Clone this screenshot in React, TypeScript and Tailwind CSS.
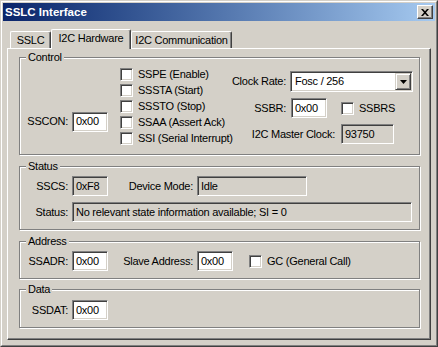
const sunken =
  "border border-t-[#808080] border-l-[#808080] border-b-white border-r-white shadow-[inset_1px_1px_0_#404040,inset_-1px_-1px_0_#d4d0c8]";

function Edit({ value, className = "", readOnly = false }: { value: string; className?: string; readOnly?: boolean }) {
  return (
    <div
      className={`${sunken} ${readOnly ? "bg-[#d4d0c8]" : "bg-white"} h-[20px] flex items-center pl-[3px] whitespace-nowrap overflow-hidden ${className}`}
    >
      {value}
    </div>
  );
}

function Label({ text, className = "" }: { text: string; className?: string }) {
  return <div className={`text-right whitespace-nowrap ${className}`}>{text}</div>;
}

function Check({ label, className = "" }: { label: string; className?: string }) {
  return (
    <div className={`flex items-center ${className}`}>
      <div className={`${sunken} bg-white w-[13px] h-[13px] shrink-0`} />
      <span className="ml-[5px] whitespace-nowrap">{label}</span>
    </div>
  );
}

function Group({ title, className = "", children }: { title: string; className?: string; children: React.ReactNode }) {
  return (
    <div className={`relative w-[401px] border border-[#808080] shadow-[1px_1px_0_white,inset_1px_1px_0_white] ${className}`}>
      <span className="absolute -top-[7px] left-[6px] px-[2px] bg-[#d4d0c8] leading-[13px]">{title}</span>
      {children}
    </div>
  );
}

function Tab({ text, active = false, className = "" }: { text: string; active?: boolean; className?: string }) {
  return (
    <div
      className={`flex justify-center items-center bg-[#d4d0c8] border-t border-l border-t-white border-l-white border-r border-r-[#404040] shadow-[inset_-1px_0_0_#808080] rounded-t-[2px] whitespace-nowrap ${
        active ? "h-[20px] -mb-[1px] pb-[2px] relative z-10" : "h-[17px] pt-[1px]"
      } ${className}`}
    >
      {text}
    </div>
  );
}

export default function App() {
  const checks = ["SSPE (Enable)", "SSSTA (Start)", "SSSTO (Stop)", "SSAA (Assert Ack)", "SSI (Serial Interrupt)"];

  return (
    <div className="w-[438px] h-[347px] bg-[#d4d0c8] text-black text-[11px] leading-[13px] tracking-[-0.25px] font-['Liberation_Sans',Arial,sans-serif] border border-t-[#d4d0c8] border-l-[#d4d0c8] border-r-[#404040] border-b-[#404040]">
      <div className="h-full border border-t-white border-l-white border-r-[#808080] border-b-[#808080] p-[1px] flex flex-col">
        {/* Title bar */}
        <div className="h-[18px] shrink-0 flex items-center justify-between bg-linear-to-r from-[#0a246a] to-[#a6caf0] pl-[2px] pr-[2px]">
          <span className="text-white font-bold text-[11.5px] tracking-normal">SSLC Interface</span>
          <div className="w-[16px] h-[14px] bg-[#d4d0c8] border border-t-white border-l-white border-r-[#404040] border-b-[#404040] shadow-[inset_-1px_-1px_0_#808080] flex items-center justify-center">
            <svg width="8" height="7" viewBox="0 0 8 7">
              <path d="M0 0h2l2 2.2L6 0h2L5 3.5 8 7H6L4 4.8 2 7H0l3-3.5z" fill="black" />
            </svg>
          </div>
        </div>

        {/* Tabs */}
        <div className="px-[4px] mt-[8px] flex flex-col">
          <div className="flex items-end h-[19px] pl-[3px]">
            <Tab text="SSLC" className="w-[41px]" />
            <Tab text="I2C Hardware" active className="w-[80px]" />
            <Tab text="I2C Communication" className="w-[101px]" />
          </div>

          <div className="h-[292px] border-t border-l border-t-white border-l-white border-r border-b border-r-[#404040] border-b-[#404040] shadow-[inset_-1px_-1px_0_#808080] pl-[11px] pt-[8px]">
            {/* Control */}
            <Group title="Control" className="h-[98px]">
              <div className="flex">
                <div className="flex items-center mt-[39px]">
                  <Label text="SSCON:" className="w-[48px]" />
                  <Edit value="0x00" className="ml-[4px] w-[36px]" />
                </div>
                <div className="ml-[12px] mt-[8px] w-[110px] flex flex-col">
                  {checks.map((c) => (
                    <Check key={c} label={c} className="h-[16px]" />
                  ))}
                </div>
                <div className="mt-[13px] flex flex-col">
                  <div className="flex items-center">
                    <Label text="Clock Rate:" className="w-[56px]" />
                    <div className={`${sunken} bg-white ml-[4px] w-[123px] h-[21px] flex items-center justify-between pl-[4px] pr-[1px]`}>
                      <span>Fosc / 256</span>
                      <div className="w-[16px] h-[17px] bg-[#d4d0c8] border border-t-[#d4d0c8] border-l-[#d4d0c8] border-r-[#404040] border-b-[#404040] shadow-[inset_1px_1px_0_white,inset_-1px_-1px_0_#808080] flex items-center justify-center">
                        <svg width="7" height="4" viewBox="0 0 7 4">
                          <path d="M0 0h7L3.5 4z" fill="black" />
                        </svg>
                      </div>
                    </div>
                  </div>
                  <div className="flex items-center mt-[6px]">
                    <Label text="SSBR:" className="w-[56px]" />
                    <Edit value="0x00" className="ml-[5px] w-[36px]" />
                    <Check label="SSBRS" className="ml-[14px]" />
                  </div>
                  <div className="flex items-center mt-[6px]">
                    <Label text="I2C Master Clock:" className="w-[105px]" />
                    <Edit value="93750" readOnly className="ml-[6px] w-[53px]" />
                  </div>
                </div>
              </div>
            </Group>

            {/* Status */}
            <Group title="Status" className="h-[64px] mt-[11px] pt-[9px]">
              <div className="flex items-center">
                <Label text="SSCS:" className="w-[48px]" />
                <Edit value="0xF8" readOnly className="ml-[4px] w-[36px]" />
                <Label text="Device Mode:" className="w-[85px]" />
                <Edit value="Idle" readOnly className="ml-[4px] w-[110px]" />
              </div>
              <div className="flex items-center mt-[6px]">
                <Label text="Status:" className="w-[48px]" />
                <Edit value="No relevant state information available; SI = 0" readOnly className="ml-[4px] w-[340px]" />
              </div>
            </Group>

            {/* Address */}
            <Group title="Address" className="h-[38px] mt-[11px] pt-[9px]">
              <div className="flex items-center">
                <Label text="SSADR:" className="w-[48px]" />
                <Edit value="0x00" className="ml-[4px] w-[36px]" />
                <Label text="Slave Address:" className="w-[85px]" />
                <Edit value="0x00" className="ml-[4px] w-[36px]" />
                <Check label="GC (General Call)" className="ml-[16px]" />
              </div>
            </Group>

            {/* Data */}
            <Group title="Data" className="h-[39px] mt-[10px] pt-[10px]">
              <div className="flex items-center">
                <Label text="SSDAT:" className="w-[48px]" />
                <Edit value="0x00" className="ml-[4px] w-[36px]" />
              </div>
            </Group>
          </div>
        </div>
      </div>
    </div>
  );
}
